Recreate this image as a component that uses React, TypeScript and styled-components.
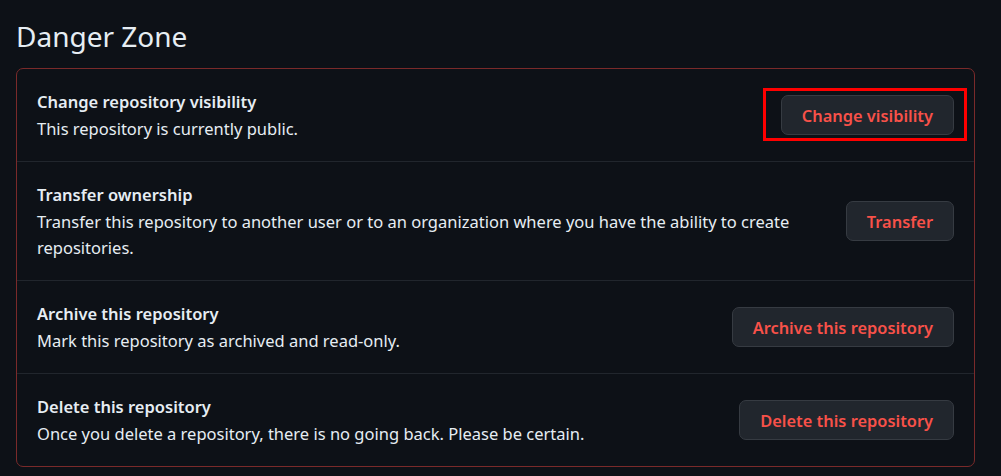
import styled, { createGlobalStyle } from 'styled-components'

const GlobalStyle = createGlobalStyle`
  html, body {
    margin: 0;
    background: #0d1117;
  }
  body {
    font-family: 'Noto Sans', 'Liberation Sans', sans-serif;
    color: #e6edf3;
  }
`

const Page = styled.div`
  padding: 18px 26px 10px 16px;
`

const Heading = styled.h2`
  margin: 0 0 14px;
  font-size: 28px;
  font-weight: 400;
  line-height: 36px;
  color: #e6edf3;
`

const DangerBox = styled.div`
  border: 1px solid #7a2a2a;
  border-radius: 7px;
`

const Row = styled.div`
  display: flex;
  align-items: center;
  justify-content: space-between;
  gap: 24px;
  padding: 19px 20px;
  & + & {
    border-top: 1px solid #21262d;
  }
`

const Text = styled.div<{ $maxWidth?: number }>`
  flex: 1;
  max-width: ${(p) => (p.$maxWidth ? `${p.$maxWidth}px` : 'none')};
  font-size: 16.5px;
`

const Title = styled.div`
  font-weight: 600;
  line-height: 28px;
  color: #e6edf3;
`

const Desc = styled.div`
  line-height: 26px;
  color: #e6edf3;
`

const Highlight = styled.span`
  display: inline-flex;
  border: 3px solid #ff0000;
  padding: 4px 10px 3px 15px;
  margin: -7px -13px -6px 0;
`

const DangerButton = styled.button`
  flex-shrink: 0;
  height: 40px;
  padding: 0 20px;
  border: 1px solid #363b42;
  border-radius: 7px;
  background: #21262d;
  color: #f85149;
  font-family: inherit;
  font-size: 16.4px;
  font-weight: 600;
  cursor: pointer;
`

interface ZoneRow {
  title: string
  desc: string
  action: string
  highlighted?: boolean
  maxWidth?: number
}

const rows: ZoneRow[] = [
  {
    title: 'Change repository visibility',
    desc: 'This repository is currently public.',
    action: 'Change visibility',
    highlighted: true,
  },
  {
    title: 'Transfer ownership',
    desc: 'Transfer this repository to another user or to an organization where you have the ability to create repositories.',
    action: 'Transfer',
    maxWidth: 770,
  },
  {
    title: 'Archive this repository',
    desc: 'Mark this repository as archived and read-only.',
    action: 'Archive this repository',
  },
  {
    title: 'Delete this repository',
    desc: 'Once you delete a repository, there is no going back. Please be certain.',
    action: 'Delete this repository',
  },
]

export default function App() {
  return (
    <Page>
      <GlobalStyle />
      <Heading>Danger Zone</Heading>
      <DangerBox>
        {rows.map((row) => (
          <Row key={row.title}>
            <Text $maxWidth={row.maxWidth}>
              <Title>{row.title}</Title>
              <Desc>{row.desc}</Desc>
            </Text>
            {row.highlighted ? (
              <Highlight>
                <DangerButton>{row.action}</DangerButton>
              </Highlight>
            ) : (
              <DangerButton>{row.action}</DangerButton>
            )}
          </Row>
        ))}
      </DangerBox>
    </Page>
  )
}
